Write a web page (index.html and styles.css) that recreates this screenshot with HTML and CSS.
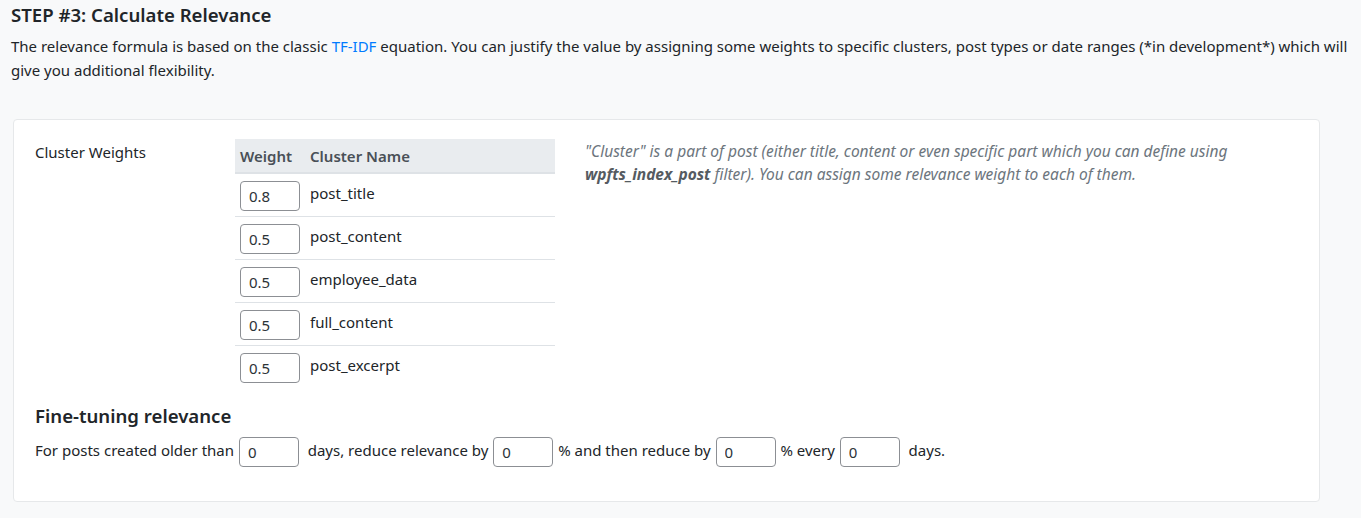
FILE: index.html
```html
<!DOCTYPE html>
<html lang="en">
<head>
    <meta charset="UTF-8">
    <meta name="viewport" content="width=device-width, initial-scale=1.0">
    <title>STEP #3: Calculate Relevance</title>
    <link rel="stylesheet" href="styles.css">
</head>
<body>
    <div class="step">
        <h5 class="step-title">STEP #3: Calculate Relevance</h5>
        <p class="step-intro">The relevance formula is based on the classic <a href="#">TF-IDF</a> equation. You can justify the value by assigning some weights to specific clusters, post types or date ranges (*in development*) which will give you additional flexibility.</p>

        <div class="card">
            <div class="cluster-row">
                <div class="cluster-label">Cluster Weights</div>
                <table class="cluster-table">
                    <thead>
                        <tr>
                            <th class="col-weight">Weight</th>
                            <th>Cluster Name</th>
                        </tr>
                    </thead>
                    <tbody>
                        <tr>
                            <td><input type="text" class="weight-input" value="0.8"></td>
                            <td>post_title</td>
                        </tr>
                        <tr>
                            <td><input type="text" class="weight-input" value="0.5"></td>
                            <td>post_content</td>
                        </tr>
                        <tr>
                            <td><input type="text" class="weight-input" value="0.5"></td>
                            <td>employee_data</td>
                        </tr>
                        <tr>
                            <td><input type="text" class="weight-input" value="0.5"></td>
                            <td>full_content</td>
                        </tr>
                        <tr>
                            <td><input type="text" class="weight-input" value="0.5"></td>
                            <td>post_excerpt</td>
                        </tr>
                    </tbody>
                </table>
                <p class="cluster-help">"Cluster" is a part of post (either title, content or even specific part which you can define using <b>wpfts_index_post</b> filter). You can assign some relevance weight to each of them.</p>
            </div>

            <h5 class="tuning-title">Fine-tuning relevance</h5>
            <div class="tuning-line">For posts created older than <input type="text" class="small-input" value="0"> &nbsp;days, reduce relevance by <input type="text" class="small-input" value="0"> % and then reduce by <input type="text" class="small-input" value="0"> % every <input type="text" class="small-input" value="0"> &nbsp;days.</div>
        </div>
    </div>
</body>
</html>
```

FILE: styles.css
```css
body {
    background-color: #f8f9fa;
    color: #212529;
    font-family: "Noto Sans", "Open Sans", sans-serif;
    font-size: 15px;
    line-height: 24px;
    margin: 0;
    padding: 0 11px;
}

.step-title {
    font-size: 18.6px;
    font-weight: 600;
    line-height: 26px;
    margin: 2px 0 6px 0;
}

.step-intro {
    margin: 0 0 37px 0;
}

.step-intro a {
    color: #007bff;
    text-decoration: none;
}

.card {
    background-color: #fff;
    border: 1px solid #e6e8ea;
    border-radius: 4px;
    margin: 0 30px 0 2px;
    padding: 19px 21px 34px 21px;
}

.cluster-row {
    display: flex;
    align-items: flex-start;
}

.cluster-label {
    width: 200px;
    padding-top: 1px;
}

.cluster-table {
    width: 320px;
    border-collapse: collapse;
}

.cluster-table th {
    background-color: #e9ecef;
    color: #495057;
    font-weight: 600;
    text-align: left;
    padding: 5px 5px 4px 5px;
    height: 24px;
    border-bottom: 2px solid #dee2e6;
}

.cluster-table .col-weight {
    width: 60px;
}

.cluster-table td {
    padding: 7px 5px 5px 5px;
    border-bottom: 1px solid #dee2e6;
    vertical-align: top;
}

.cluster-table tr:last-child td {
    border-bottom: none;
}

.weight-input,
.small-input {
    box-sizing: border-box;
    width: 60px;
    height: 30px;
    border: 1px solid #8c8f94;
    border-radius: 4px;
    padding: 0 8px;
    font-family: inherit;
    font-size: 15px;
    color: #2c3338;
    background-color: #fff;
    margin: 0;
}

.weight-input {
    display: block;
}

.small-input {
    vertical-align: middle;
    margin: 0 1px;
}

.cluster-help {
    flex: 1;
    margin: 1px 0 0 30px;
    color: #6c757d;
    font-style: italic;
    font-size: 15.5px;
    line-height: 23px;
}

.cluster-help b {
    color: #555b61;
}

.tuning-title {
    font-size: 18.6px;
    font-weight: 600;
    line-height: 28px;
    margin: 14px 0 5px 0;
}

.tuning-line {
    line-height: 30px;
}
```
